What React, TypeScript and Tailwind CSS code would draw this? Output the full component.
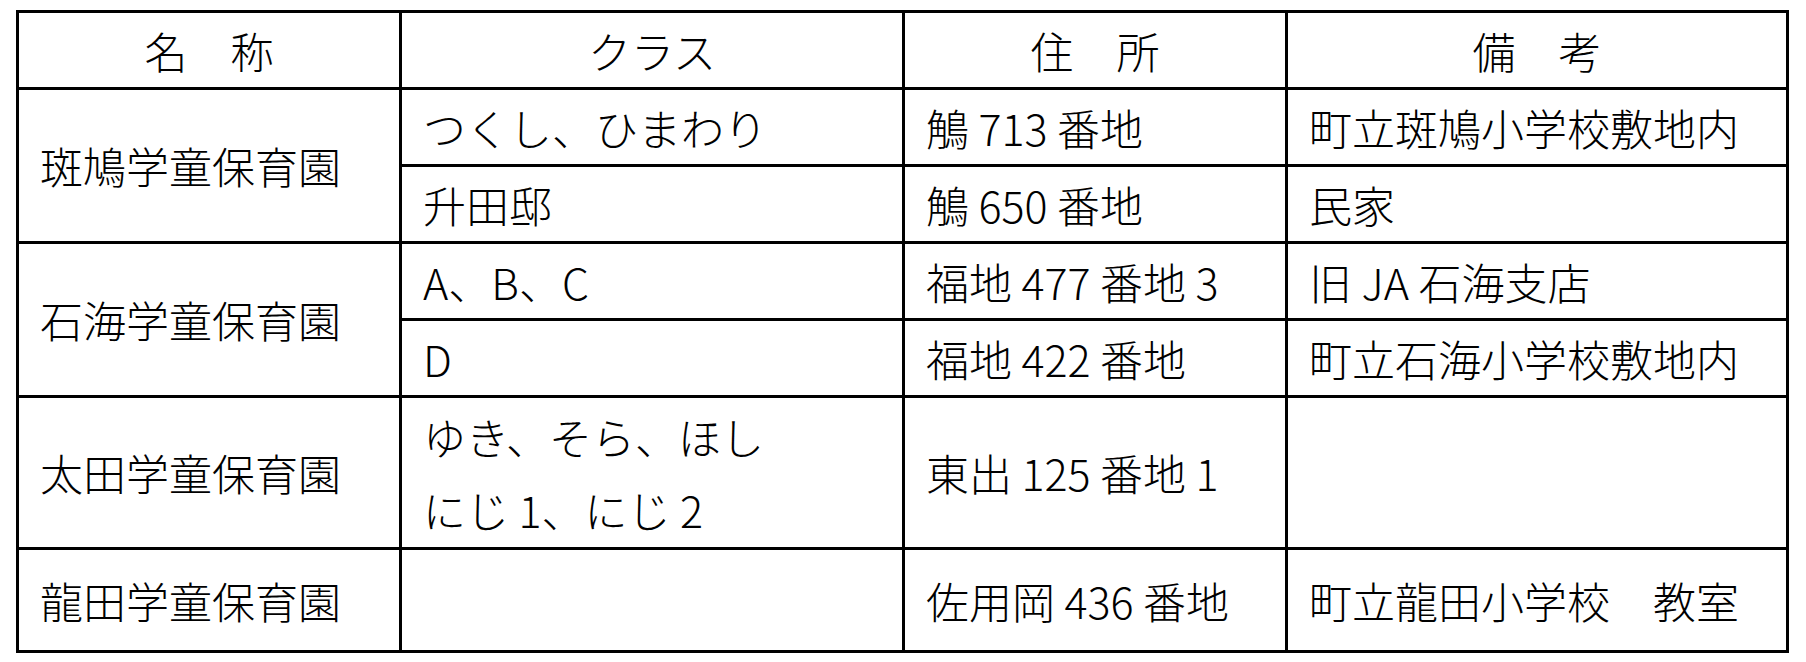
const rows = [
  {
    name: "斑鳩学童保育園",
    items: [
      { cls: ["つくし、ひまわり"], addr: "鵤 713 番地", note: "町立斑鳩小学校敷地内", h: "h-[77px]" },
      { cls: ["升田邸"], addr: "鵤 650 番地", note: "民家", h: "h-[77px]" },
    ],
  },
  {
    name: "石海学童保育園",
    items: [
      { cls: ["A、B、C"], addr: "福地 477 番地 3", note: "旧 JA 石海支店", h: "h-[77px]" },
      { cls: ["D"], addr: "福地 422 番地", note: "町立石海小学校敷地内", h: "h-[77px]" },
    ],
  },
  {
    name: "太田学童保育園",
    items: [
      { cls: ["ゆき、そら、ほし", "にじ 1、にじ 2"], addr: "東出 125 番地 1", note: "", h: "h-[152px]" },
    ],
  },
  {
    name: "龍田学童保育園",
    items: [{ cls: [], addr: "佐用岡 436 番地", note: "町立龍田小学校　教室", h: "h-[103px]" }],
  },
];

const cell = "border-[3px] border-black pl-[21px] align-middle whitespace-nowrap";

export default function App() {
  return (
    <div
      className="w-[1806px] h-[662px] bg-white text-black"
      style={{ fontFamily: '"Noto Sans CJK JP", "Noto Sans", sans-serif' }}
    >
      <table className="ml-[16px] mt-[10px] table-fixed border-collapse text-[43px] font-light leading-none">
        <colgroup>
          <col className="w-[383px]" />
          <col className="w-[503px]" />
          <col className="w-[383px]" />
          <col className="w-[501px]" />
        </colgroup>
        <thead>
          <tr className="h-[77px]">
            <th className="border-[3px] border-black font-light">名　称</th>
            <th className="border-[3px] border-black font-light">クラス</th>
            <th className="border-[3px] border-black font-light">住　所</th>
            <th className="border-[3px] border-black font-light">備　考</th>
          </tr>
        </thead>
        <tbody>
          {rows.map((g) =>
            g.items.map((it, i) => (
              <tr key={g.name + i} className={it.h}>
                {i === 0 && (
                  <td rowSpan={g.items.length} className={cell}>
                    {g.name}
                  </td>
                )}
                <td className={cell + " leading-[73px]"}>
                  {it.cls.map((c) => (
                    <div key={c}>{c}</div>
                  ))}
                </td>
                <td className={cell}>{it.addr}</td>
                <td className={cell}>{it.note}</td>
              </tr>
            ))
          )}
        </tbody>
      </table>
    </div>
  );
}
